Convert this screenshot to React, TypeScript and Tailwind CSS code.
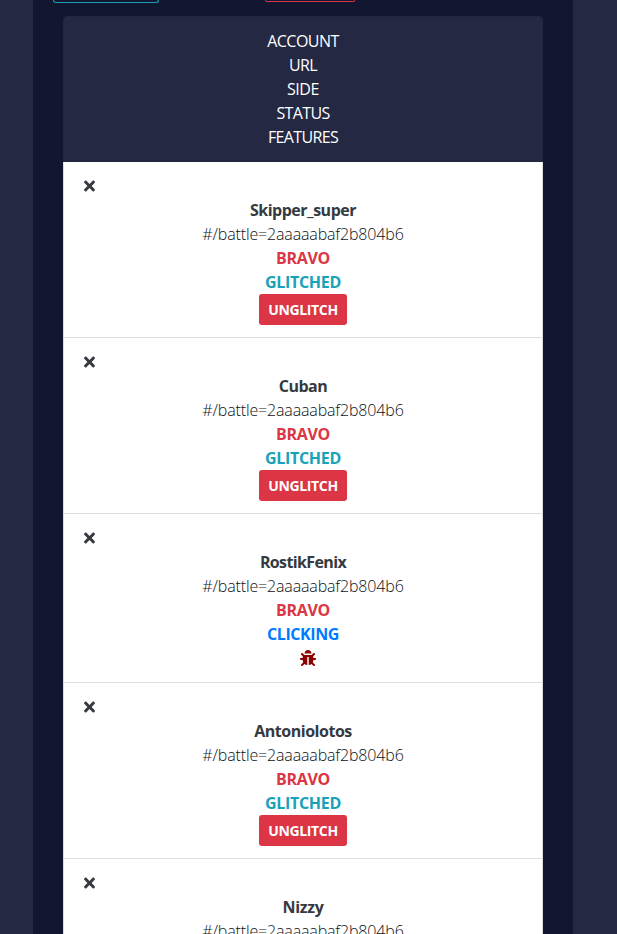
import { FaBug, FaTimes } from "react-icons/fa";

type Account = { name: string; tracking: string; clicking?: boolean };

const accounts: Account[] = [
  { name: "Skipper_super", tracking: "tracking-[-0.5px]" },
  { name: "Cuban", tracking: "tracking-[-0.5px]" },
  { name: "RostikFenix", tracking: "tracking-[-0.62px]", clicking: true },
  { name: "Antoniolotos", tracking: "tracking-[-0.47px]" },
  { name: "Nizzy", tracking: "tracking-[-0.3px]" },
];

const headings = [
  { label: "ACCOUNT", tracking: "tracking-[-0.5px]" },
  { label: "URL", tracking: "tracking-[-0.6px]" },
  { label: "SIDE", tracking: "tracking-[-0.4px]" },
  { label: "STATUS", tracking: "tracking-[-0.65px]" },
  { label: "FEATURES", tracking: "tracking-[-0.65px]" },
];

function AccountRow({ name, tracking, clicking }: Account) {
  return (
    <li className="border-x border-b border-[#dfdfdf] bg-white px-5 py-3 text-center">
      <div className="flex h-6 items-center">
        <FaTimes className="h-4 w-[11px]" />
      </div>
      <div className={`font-bold ${tracking}`}>{name}</div>
      <div className="font-light tracking-[-0.15px] text-[#0c1218]">#/battle=2aaaaabaf2b804b6</div>
      <div className="font-bold tracking-[-0.3px] text-[#dc3545]">BRAVO</div>
      <div
        className={`font-bold ${
          clicking ? "tracking-[-0.4px] text-[#007bff]" : "tracking-[-0.3px] text-[#17a2b8]"
        }`}
      >
        {clicking ? "CLICKING" : "GLITCHED"}
      </div>
      {clicking ? (
        <div className="flex h-6 items-center justify-center pl-[10px] text-[#8b0000]">
          <FaBug className="size-4" />
        </div>
      ) : (
        <button className="mx-auto block h-[31px] w-[88px] rounded-[3px] bg-[#dc3545] text-center text-sm font-bold tracking-[-0.35px] text-white">
          UNGLITCH
        </button>
      )}
    </li>
  );
}

export default function App() {
  return (
    <div className="h-[934px] overflow-hidden bg-[#242842] px-[33px] font-['Open_Sans','Noto_Sans',sans-serif] text-base leading-6 text-[#343a40]">
      <main className="h-[934px] w-[540px] overflow-hidden bg-[#121631] px-[30px]">
        <div className="flex h-4 items-start">
          <div className="-ml-[10px] h-[3px] w-[106px] rounded-b-[4px] border border-t-0 border-[#17a2b8]" />
          <div className="ml-[106px] h-[2px] w-[90px] rounded-b-[3px] border border-t-0 border-[#dc3545]" />
        </div>
        <ul>
          <li className="rounded-t-[4px] border border-[#22263b] bg-[#242842] py-3 text-center text-white">
            {headings.map((h) => (
              <div key={h.label} className={h.tracking}>{h.label}</div>
            ))}
          </li>
          {accounts.map((account) => (
            <AccountRow key={account.name} {...account} />
          ))}
        </ul>
      </main>
    </div>
  );
}
